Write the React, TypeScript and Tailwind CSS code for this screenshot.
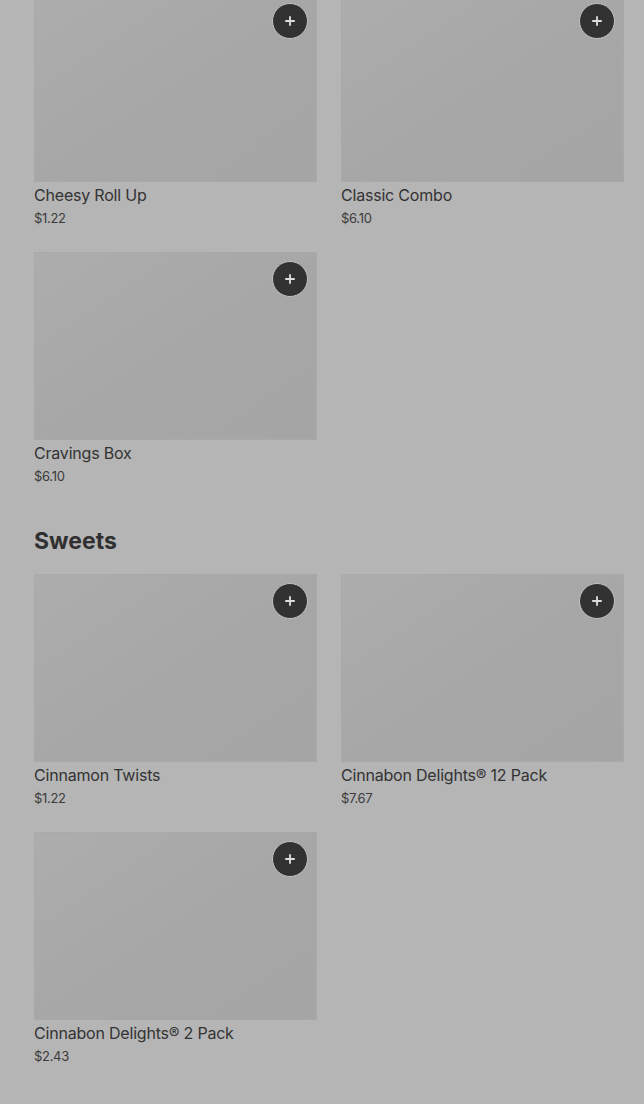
import { Plus } from "lucide-react"

type Item = { name: string; price: string }

const combos: Item[] = [
  { name: "Cheesy Roll Up", price: "$1.22" },
  { name: "Classic Combo", price: "$6.10" },
  { name: "Cravings Box", price: "$6.10" },
]

const sweets: Item[] = [
  { name: "Cinnamon Twists", price: "$1.22" },
  { name: "Cinnabon Delights® 12 Pack", price: "$7.67" },
  { name: "Cinnabon Delights® 2 Pack", price: "$2.43" },
]

function ItemCard({ item }: { item: Item }) {
  return (
    <div className="flex flex-col">
      <div className="relative h-[188px] border border-[#a9a9a9] bg-gradient-to-br from-[#adadad] via-[#a7a7a7] to-[#a5a5a5]">
        <button className="absolute right-[8px] top-[8px] flex h-[36px] w-[36px] items-center justify-center rounded-full border border-[#c2c2c2] bg-[#323232]">
          <Plus className="h-[14px] w-[14px] text-[#dcdcdc]" strokeWidth={3.2} />
        </button>
      </div>
      <p className="mt-[3px] text-[16px] leading-[20px] tracking-[-0.2px] text-[#333333]">{item.name}</p>
      <p className="mt-[4px] text-[13px] leading-[18px] tracking-[-0.3px] text-[#3b3b3b]">{item.price}</p>
    </div>
  )
}

export default function App() {
  return (
    <div
      className="h-[1104px] overflow-hidden bg-[#b5b5b5] pl-[34px] pr-[20px]"
      style={{ fontFamily: "Inter, 'Noto Sans', sans-serif" }}
    >
      <div className="-mt-[6px] grid grid-cols-2 gap-x-6 gap-y-[25px]">
        {combos.map((item) => (
          <ItemCard key={item.name} item={item} />
        ))}
      </div>

      <h2 className="mt-[40px] mb-[17px] text-[23px] font-bold leading-[32px] text-[#303030]">Sweets</h2>

      <div className="grid grid-cols-2 gap-x-6 gap-y-[25px]">
        {sweets.map((item) => (
          <ItemCard key={item.name} item={item} />
        ))}
      </div>
    </div>
  )
}
